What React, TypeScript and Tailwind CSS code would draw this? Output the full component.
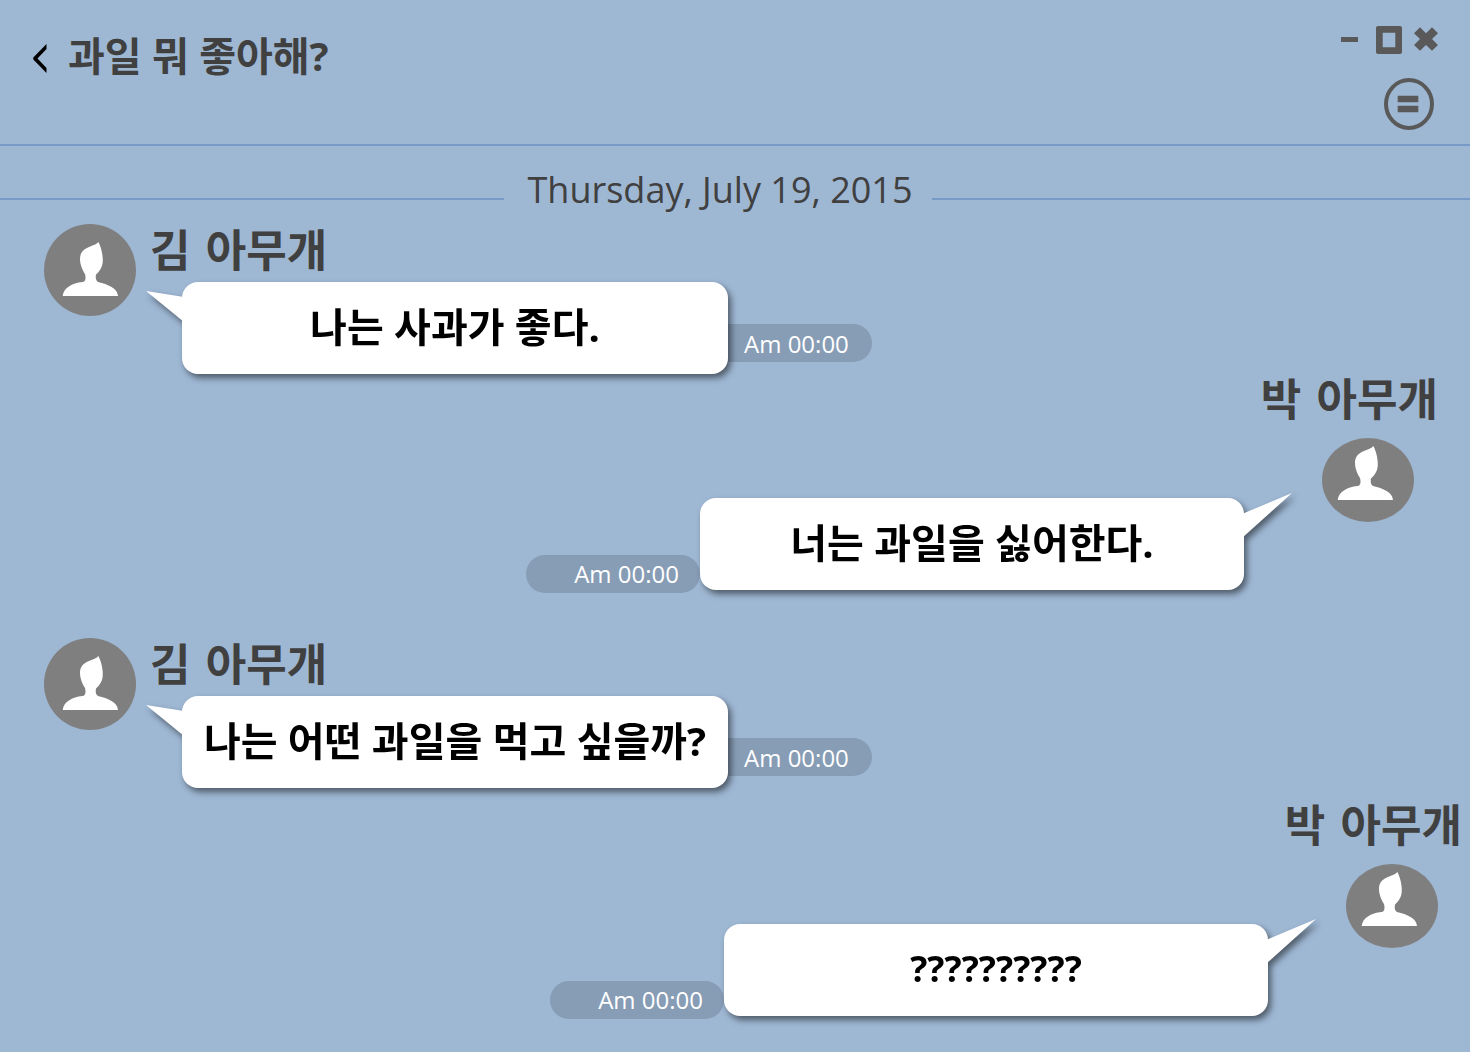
type Message = {
  side: 'left' | 'right';
  name: string;
  text: string;
  time: string;
  spacing: string;
  size: string;
};

const messages: Message[] = [
  { side: 'left', name: '김 아무개', text: '나는 사과가 좋다.', time: 'Am 00:00', spacing: 'pl-11', size: 'text-[40px]' },
  { side: 'right', name: '박 아무개', text: '너는 과일을 싫어한다.', time: 'Am 00:00', spacing: 'mt-px pr-8', size: 'text-[40px]' },
  { side: 'left', name: '김 아무개', text: '나는 어떤 과일을 먹고 싶을까?', time: 'Am 00:00', spacing: 'mt-12 pl-11', size: 'text-[40px]' },
  { side: 'right', name: '박 아무개', text: '??????????', time: 'Am 00:00', spacing: 'mt-[13px] pr-2', size: 'text-[36px]' },
];

function Person({ className }: { className: string }) {
  return (
    <svg viewBox="18 18 57 54" className={className} fill="#fff" aria-hidden="true">
      <path d="M54.3 18C51 23 36 22 36 35C36 41 39 47 41 50C42.500 56 40.500 58 38.500 58C28 59 19.500 64 18.700 72H74C73.500 64 64 60.500 54 58C51.500 56.500 51.500 53 52 50.500C58 45 59.500 40 58.500 32C58 26 56 21 54.300 18Z" />
    </svg>
  );
}

function Name({ children, className }: { children: string; className: string }) {
  return (
    <h2 className={`font-['DejaVu_Sans','Noto_Sans_CJK_KR',sans-serif] text-[44px] font-bold text-[#404040] ${className}`}>{children}</h2>
  );
}

function Text({ m }: { m: Message }) {
  return <p className={`pb-0.5 leading-[56px] font-bold text-black ${m.size}`}>{m.text}</p>;
}

function LeftMessage({ m }: { m: Message }) {
  return (
    <li className={`flex items-start gap-[14px] ${m.spacing}`}>
      <div className="flex h-[92px] w-[92px] shrink-0 justify-center rounded-full bg-[#7f7f7f] pt-[18px]">
        <Person className="h-[54px] w-[57px]" />
      </div>
      <div>
        <Name className="h-[58px] leading-[56px]">{m.name}</Name>
        <div className="ml-8 flex items-end">
          <div className="relative z-10 flex min-h-[92px] w-[546px] items-center justify-center rounded-2xl bg-white drop-shadow-[3px_4px_3px_rgba(0,0,0,0.5)]">
            <svg viewBox="0 0 38 30" className="absolute top-[9px] right-full -mr-0.5 h-[30px] w-[38px]" fill="#fff" aria-hidden="true">
              <path d="M0 0L38 6V31Z" />
            </svg>
            <Text m={m} />
          </div>
          <time className="mb-3 flex h-[38px] w-36 items-center rounded-r-full bg-[#879cb5] pt-0.5 pl-4 text-2xl text-white">{m.time}</time>
        </div>
      </div>
    </li>
  );
}

function RightMessage({ m }: { m: Message }) {
  return (
    <li className={`flex flex-col items-end ${m.spacing}`}>
      <Name className="mb-[11px] h-[52px] leading-[52px]">{m.name}</Name>
      <div className="mr-6 flex items-start gap-[78px]">
        <div className="mt-[60px] flex items-end">
          <time className="-mb-[3px] flex h-[38px] w-[174px] items-center justify-end rounded-full bg-[#879cb5] pr-[21px] text-2xl text-white">{m.time}</time>
          <div className="relative flex min-h-[92px] w-[544px] items-center justify-center rounded-2xl bg-white drop-shadow-[3px_4px_3px_rgba(0,0,0,0.5)]">
            <svg viewBox="0 0 50 44" className="absolute -top-[5px] left-full -ml-0.5 h-[44px] w-[50px]" fill="#fff" aria-hidden="true">
              <path d="M50 0L0 21V45Z" />
            </svg>
            <Text m={m} />
          </div>
        </div>
        <div className="flex h-[84px] w-[92px] shrink-0 justify-center rounded-[50%] bg-[#7f7f7f] pt-2 pr-1.5">
          <Person className="h-[54px] w-[57px]" />
        </div>
      </div>
    </li>
  );
}

export default function App() {
  return (
    <main className="min-h-screen overflow-x-hidden bg-[#9eb7d3] font-['Open_Sans','Noto_Sans_CJK_KR',sans-serif]">
      <header className="flex h-[146px] items-start justify-between border-b-2 border-[#779ac7] pr-8 pl-8">
        <div className="flex items-center gap-5 pt-7">
          <button type="button" aria-label="뒤로" className="mt-1">
            <svg viewBox="0 0 16 30" className="h-[30px] w-4" fill="#000" aria-hidden="true">
              <path d="M14.500 1V6L5.500 15.500L14.500 25V30L1.300 16.500V14.500Z" />
            </svg>
          </button>
          <h1 className="text-[40px] leading-[56px] font-bold text-[#404040]">과일 뭐 좋아해?</h1>
        </div>
        <div className="flex flex-col items-end gap-6 pt-[26px]">
          <div className="flex h-7 items-center">
            <button type="button" aria-label="최소화" className="mr-[18px]">
              <svg viewBox="0 0 17 28" className="h-7 w-[17px]" fill="#595959" aria-hidden="true">
                <path d="M0 11H17V16H0Z" />
              </svg>
            </button>
            <button type="button" aria-label="최대화" className="mr-3">
              <svg viewBox="0 0 26 28" className="h-7 w-[26px]" fill="#595959" fillRule="evenodd" aria-hidden="true">
                <path d="M2 0H24Q26 0 26 2V26Q26 28 24 28H2Q0 28 0 26V2Q0 0 2 0ZM6.700 6.700V21.300H19.300V6.700Z" />
              </svg>
            </button>
            <button type="button" aria-label="닫기">
              <svg viewBox="0 0 24 28" className="h-7 w-6" fill="#595959" aria-hidden="true">
                <path d="M6 1.300L12 7.300L18 1.300L24 7.300L18 13L24 19L18 24.700L12 19L6 24.700L0 19L6 13L0 7.300Z" />
              </svg>
            </button>
          </div>
          <button type="button" aria-label="메뉴" className="mr-1">
            <svg viewBox="0 0 50 52" className="h-[52px] w-[50px]" fill="#595959" aria-hidden="true">
              <ellipse cx="25" cy="26" rx="23" ry="24" fill="none" stroke="#595959" strokeWidth="4" />
              <path d="M13.700 17.700H34.300V24.200H13.700ZM13.700 27.700H34.300V34.200H13.700Z" />
            </svg>
          </button>
        </div>
      </header>

      <div className="flex h-[78px] items-start">
        <div className="mt-[52px] h-0.5 flex-[504] bg-[#779ac7]" />
        <p className="w-[428px] pt-[18px] pl-1 text-center text-[36px] leading-[52px] whitespace-nowrap text-[#404040]">Thursday, July 19, 2015</p>
        <div className="mt-[52px] h-0.5 flex-[538] bg-[#779ac7]" />
      </div>

      <ul className="pb-8">
        {messages.map((m, i) => (m.side === 'left' ? <LeftMessage key={i} m={m} /> : <RightMessage key={i} m={m} />))}
      </ul>
    </main>
  );
}
